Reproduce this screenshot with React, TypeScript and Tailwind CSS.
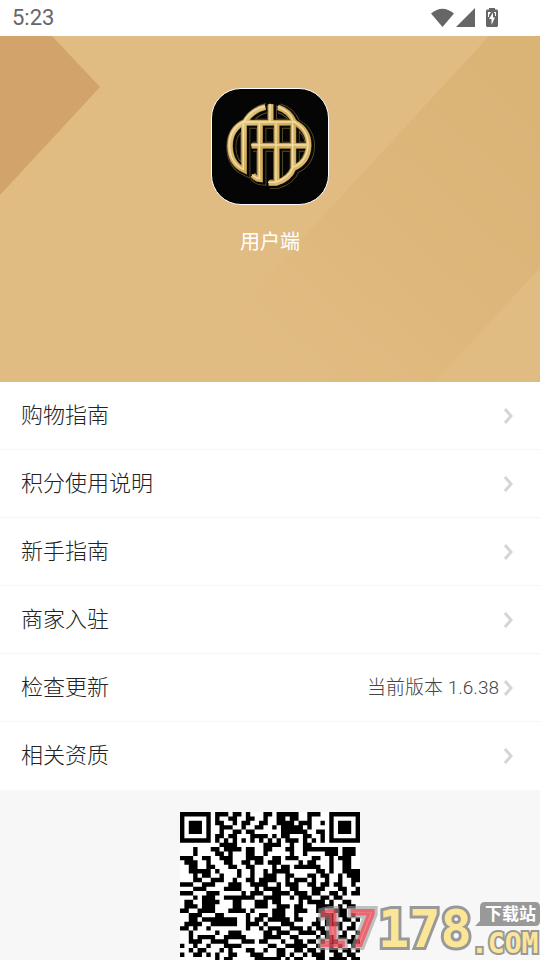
const menu = [
  { label: "购物指南", href: "#shopping" },
  { label: "积分使用说明", href: "#points" },
  { label: "新手指南", href: "#beginner" },
  { label: "商家入驻", href: "#merchant" },
  { label: "检查更新", href: "#update", value: "当前版本 1.6.38" },
  { label: "相关资质", href: "#license" },
];

const qrRows = [
  "11111110111011010001101111100111001111111",
  "10000010100110011001001101100100001000001",
  "10111010110010110011001111011100101011101",
  "10111010011100100110010111110100001011101",
  "10111010010011011000000111111001101011101",
  "10000010110110001111010110001100101000001",
  "11111110101010101010101011101010101111111",
  "00000000011110000001111001001100000000000",
  "00010001101111011001100011001111111101110",
  "00010000110100011001000001001000011101110",
  "11100110011100011110011011100011001011100",
  "01110010001100110110111000010110001001100",
  "00110011000110011000010110111111001001100",
  "00111110100001001001011110000001101001111",
  "00010110010001001001110011000110110010111",
  "00011001110010011011110010111010010010011",
  "11100111000111001111001011100110110110010",
  "00011100001111000101111001100011100011001",
  "11100011100000101110011110111011001101011",
  "00010111001111111001111001011100110110000",
  "01100111100011000111011000010111101001100",
  "01110111000011000111001110110001111010110",
  "11001111000111101000011100111001100111000",
  "00111000110000010011011100100000111011010",
  "00110111111110010110111110110001011001101",
  "01111001111110011101000111000011011110010",
  "11010010000000010010111001110101100010110",
  "00100000100111000001101110011110110001001",
  "00101111001111100001111001100001011011010",
  "00111001111000111011000100110110101100111",
  "10010010001111000000110011111001001010010",
  "00101100010100011001001100110110101101101",
  "10011010100110001110001101001011100110110",
  "00000000101100000111111010110001101111011",
];

// One sub-path for each horizontal run of dark modules.
const qrPath = qrRows
  .flatMap((row, y) =>
    [...row.matchAll(/1+/g)].map((run) => `M${run.index} ${y}h${run[0].length}v1h-${run[0].length}z`)
  )
  .join("");

const logoStrokes =
  "M196 87Q156 96 135 132Q90 152 90 204Q91 257 132 276V138M128 134H290M212 79V133M234 88Q268 98 283 133Q326 155 326 202Q324 252 281 270Q268 304 228 315H206M180 138V304Q168 303 158 291M230 138V312M280 138V270M155 203H322";

function StatusBar() {
  return (
    <div className="flex h-9 shrink-0 items-center justify-between bg-white pl-3 pr-10 text-[#666]">
      <time className="font-[Roboto,sans-serif] text-[22px] leading-9">5:23</time>
      <div className="flex items-center">
        <svg className="mr-0.5 h-5 w-[23px]" viewBox="0 0 23 20" fill="currentColor" aria-hidden="true">
          <path d="M0 5.5Q11.5-4 23 5.5L11.5 19z" />
        </svg>
        <svg className="h-5 w-5" viewBox="0 0 20 20" fill="currentColor" aria-hidden="true">
          <path d="M0 19L19 0V19z" />
        </svg>
        <svg className="ml-2.5 mr-0.5 h-5 w-3" viewBox="0 0 12 20" aria-hidden="true">
          <path d="M3 0h6v1.5h2l1 1V18l-1 1H1l-1-1V2.500l1-1h2z" fill="currentColor" />
          <path d="M2 4h3L3 7v2H2zM8 4h2v4H9V5H8zM7 4.500L3 11h2.500v6L9 9.500H7z" fill="#fff" />
        </svg>
      </div>
    </div>
  );
}

function AppLogo() {
  return (
    <svg
      className="h-[117px] w-[118px] rounded-[30px] border border-white bg-[#050505]"
      viewBox="36 33 348 345"
      fill="none"
      role="img"
      aria-label="logo"
    >
      <defs>
        <linearGradient id="gold" x1="0" y1="0" x2="1" y2="1">
          <stop offset="0" stopColor="#ead395" />
          <stop offset="0.5" stopColor="#d0ab5b" />
          <stop offset="1" stopColor="#e2c47a" />
        </linearGradient>
      </defs>
      <g transform="translate(4 3)">
        <path d={logoStrokes} stroke="#5c4f32" strokeWidth="30" />
        <path d={logoStrokes} stroke="#080704" strokeWidth="25" />
      </g>
      <path d={logoStrokes} stroke="#8a6a2c" strokeWidth="18" />
      <path d={logoStrokes} stroke="url(#gold)" strokeWidth="15" />
      <path d={logoStrokes} stroke="#f3e0a8" strokeWidth="4" transform="translate(-2 -2)" />
    </svg>
  );
}

function Hero() {
  return (
    <header className="relative h-[346px] shrink-0 bg-[#e1bc82]">
      <svg
        className="absolute inset-0 size-full"
        viewBox="0 0 540 346"
        preserveAspectRatio="none"
        aria-hidden="true"
      >
        <defs>
          <linearGradient id="band" gradientUnits="userSpaceOnUse" x1="540" y1="60" x2="290" y2="330">
            <stop offset="0" stopColor="#dab377" />
            <stop offset="0.6" stopColor="#deb77c" />
            <stop offset="1" stopColor="#e1bc82" />
          </linearGradient>
        </defs>
        <path d="M489 0H540V232L435 346H170z" fill="url(#band)" />
        <path d="M0 0H52L100 51L0 159z" fill="#d2a36a" />
      </svg>
      <div className="relative flex flex-col items-center gap-5 pt-[52px]">
        <AppLogo />
        <h1 className="text-xl leading-[34px] text-white">用户端</h1>
      </div>
    </header>
  );
}

function Watermark() {
  return (
    <svg className="absolute bottom-0 right-0 h-[70px] w-[230px]" viewBox="0 0 230 70" aria-hidden="true">
      <g
        className="font-['DejaVu_Sans_Mono',monospace] font-bold"
        stroke="#999"
        strokeWidth="6"
        strokeLinejoin="miter"
        paintOrder="stroke"
      >
        <text x="6" y="57" fontSize="52" fill="#ff3040" fillOpacity="0.6" strokeOpacity="0.6">
          17
        </text>
        <text x="68" y="57" fontSize="52" fill="#fae696">
          178
        </text>
        <text x="161" y="63" fontSize="28" fill="#fae696" strokeWidth="4">
          .COM
        </text>
      </g>
      <path d="M175 12h50q5 0 5 5v14q0 5-5 5h-60l5-5V17q0-5 5-5z" fill="#999" />
      <text x="175" y="30" fontSize="17" fontWeight="bold" fill="#fff">
        下载站
      </text>
    </svg>
  );
}

export default function App() {
  return (
    <div className="relative flex h-screen flex-col overflow-hidden bg-[#f7f7f7] font-[Roboto,'Noto_Sans_CJK_SC',sans-serif]">
      <StatusBar />
      <Hero />
      <nav className="shrink-0 bg-white">
        {menu.map((item) => (
          <a
            key={item.label}
            href={item.href}
            className="flex h-[68px] items-center border-b border-[#f6f6f6] pl-[21px] pr-[27px] last:border-white"
          >
            <span className="flex-1 text-[22px] font-light leading-8 text-[#222]">{item.label}</span>
            {item.value && (
              <span className="mr-1 text-[19px] font-light leading-8 text-[#444]">{item.value}</span>
            )}
            <svg
              className="h-4 w-[10px]"
              viewBox="0 0 10 16"
              fill="none"
              stroke="#d5d5d5"
              strokeWidth="3"
              aria-hidden="true"
            >
              <path d="M2 1l6 7l-6 7" />
            </svg>
          </a>
        ))}
      </nav>
      <section className="flex flex-1 justify-center overflow-hidden pt-[22px]">
        <svg
          className="h-[149px] w-[180px] shrink-0 bg-white"
          viewBox="0 0 41 34"
          preserveAspectRatio="xMidYMin slice"
          role="img"
          aria-label="二维码"
        >
          <path d={qrPath} fill="#000" />
        </svg>
      </section>
      <Watermark />
    </div>
  );
}
